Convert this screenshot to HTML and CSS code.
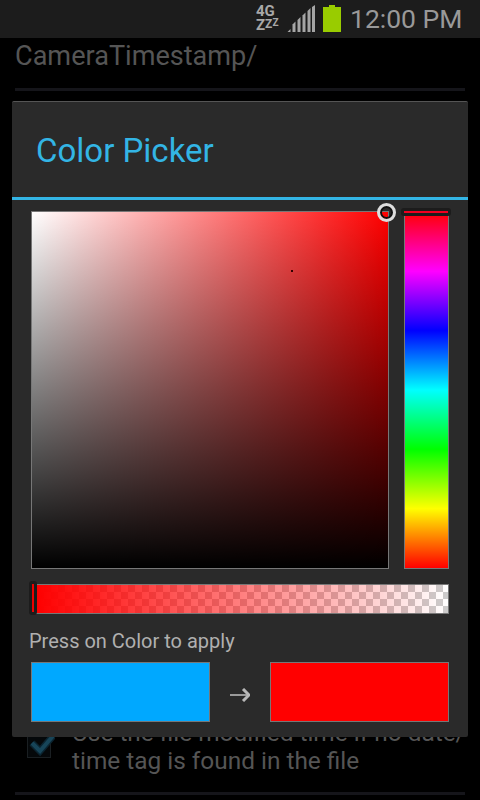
FILE: index.html
```html
<!DOCTYPE html>
<html lang="en">
<head>
<meta charset="utf-8">
<title>Color Picker</title>
<link rel="stylesheet" href="styles.css">
</head>
<body>
<div class="screen">
  <header class="status">
    <div class="net">
      <span class="net-top">4G</span>
      <span class="net-zzz"><span class="z1">Z</span><span class="z2">Z</span><span class="z3">Z</span></span>
    </div>
    <svg class="signal" width="28" height="27" viewBox="0 0 28 27">
      <polygon points="0.5,27 3.5,24 3.5,27" fill="#a5a5a5"/>
      <polygon points="5.5,27 5.5,19.5 8.5,16.5 8.5,27" fill="#a5a5a5"/>
      <polygon points="10.5,27 10.5,15 13.5,12 13.5,27" fill="#a5a5a5"/>
      <polygon points="15.5,27 15.5,10.5 18.5,7.5 18.5,27" fill="#a5a5a5"/>
      <polygon points="20.5,27 20.5,6 23.5,3 23.5,27" fill="#a5a5a5"/>
      <polygon points="25,27 25,2 28,0 28,27" fill="#a5a5a5"/>
    </svg>
    <div class="battery"><div class="battery-nub"></div><div class="battery-body"></div></div>
    <span class="time">12:00 PM</span>
  </header>

  <main class="prefs">
    <div class="path">CameraTimestamp/</div>
    <div class="rule"></div>
    <div class="spacer"></div>
    <div class="pref-row">
      <svg class="check" width="28" height="26" viewBox="0 0 28 26">
        <rect x="0.5" y="4.5" width="23" height="21" fill="#05080a" stroke="#1a1f22"/>
        <path d="M5 11l8 8L26 4" fill="none" stroke="#0b2430" stroke-width="7"/>
        <path d="M5 11l8 8L26 4" fill="none" stroke="#174559" stroke-width="4"/>
      </svg>
      <div class="pref-text">Use the file modified time if no date/<br>time tag is found in the file</div>
    </div>
    <div class="rule rule-end"></div>
  </main>

  <section class="dialog">
    <h1 class="title">Color Picker</h1>
    <div class="title-line"></div>
    <div class="picker">
      <div class="sv">
        <span class="speck"></span>
      </div>
      <div class="hue"></div>
    </div>
    <div class="alpha"></div>
    <p class="hint">Press on Color to apply</p>
    <div class="swatches">
      <button class="swatch swatch-old" type="button" aria-label="Old color"></button>
      <svg class="arrow" width="20" height="14" viewBox="0 0 20 14">
        <path d="M0 7h17" fill="none" stroke="#9a9a9a" stroke-width="2"/>
        <path d="M13 1l6 6-6 6" fill="none" stroke="#b8b8b8" stroke-width="3"/>
      </svg>
      <button class="swatch swatch-new" type="button" aria-label="New color"></button>
    </div>
    <span class="sv-handle"></span>
    <span class="hue-handle"></span>
    <span class="alpha-handle"></span>
  </section>
</div>
</body>
</html>
```

FILE: styles.css
```css
* { box-sizing: border-box; }
html, body { margin: 0; padding: 0; background: #000; }
body { font-family: Roboto, "Liberation Sans", sans-serif; }

.screen {
  position: relative;
  width: 480px;
  height: 800px;
  overflow: hidden;
  background: #000;
}

.status {
  display: flex;
  align-items: center;
  height: 38px;
  padding-left: 256px;
  background: #1c1c1c;
}
.net {
  display: flex;
  flex: none;
  flex-direction: column;
  width: 21px;
  color: #a8a8a8;
  font-weight: 700;
}
.net-top { height: 13px; margin-top: -1px; margin-bottom: 1px; font-size: 15px; line-height: 13px; }
.net-zzz { display: flex; align-items: flex-start; height: 13px; }
.z1 { font-size: 15px; line-height: 13px; }
.z2 { font-size: 12px; line-height: 10px; }
.z3 { font-size: 10px; line-height: 8px; }
.signal { flex: none; margin-left: 10px; margin-top: -1px; }
.battery { flex: none; margin-left: 8px; width: 18px; margin-top: -1px; }
.battery-nub { width: 6px; height: 2px; margin: 0 auto; background: #99cc00; }
.battery-body { height: 25px; background: #99cc00; }
.time {
  margin-left: 9px;
  font-size: 26.5px;
  line-height: 38px;
  color: #999;
  white-space: nowrap;
}

.prefs { padding: 0 15px; }
.path {
  height: 37px;
  font-size: 27.1px;
  line-height: 36px;
  color: #555;
}
.rule { height: 3px; margin-top: 13px; background: #15151a; }
.spacer { height: 633px; }
.pref-row { display: flex; gap: 17px; padding-left: 12px; }
.check { flex: none; margin-top: 8px; }
.pref-text {
  font-size: 24.4px;
  line-height: 28px;
  color: #555;
  white-space: nowrap;
  margin-top: -5px;
}
.rule-end { margin-top: 17px; }

.dialog {
  position: absolute;
  left: 12px;
  top: 101px;
  width: 456px;
  height: 636px;
  display: flex;
  flex-direction: column;
  background: #2a2a2a;
  border-top: 1px solid #555;
  border-radius: 2px;
}
.title {
  margin: 0;
  height: 95px;
  padding-left: 24px;
  font-size: 33px;
  font-weight: 400;
  line-height: 98px;
  color: #33b5e5;
}
.title-line { height: 3px; background: #33b5e5; }
.picker {
  display: flex;
  gap: 15px;
  margin: 11px 0 0 19px;
}
.sv {
  position: relative;
  width: 358px;
  height: 358px;
  border: 1px solid #777;
  background:
    linear-gradient(to bottom, rgba(0,0,0,0), #000),
    linear-gradient(to right, #fff, #f00);
}
.speck {
  position: absolute;
  left: 259px;
  top: 58px;
  width: 2px;
  height: 2px;
  background: #300;
}
.hue {
  width: 45px;
  height: 358px;
  border: 1px solid #777;
  background: linear-gradient(to bottom,
    #f00 0%, #f0f 16.67%, #00f 33.33%, #0ff 50%, #0f0 66.67%, #ff0 83.33%, #f00 100%);
}
.alpha {
  width: 413px;
  height: 30px;
  margin: 15px 0 0 24px;
  border: 1px solid #777;
  background:
    linear-gradient(to right, #f00, rgba(255,0,0,0)),
    repeating-conic-gradient(#ccc 0 25%, #fff 0 50%) 0 0 / 14px 14px;
}
.hint {
  margin: 15px 0 0 17px;
  font-size: 20px;
  line-height: 24px;
  color: #b0b0b0;
}
.swatches {
  display: flex;
  align-items: center;
  margin: 9px 0 0 19px;
}
.swatch {
  width: 179px;
  height: 60px;
  padding: 0;
  border: 1px solid #777;
  border-radius: 0;
}
.swatch-old { background: #00a8ff; }
.swatch-new { background: #f00; }
.arrow { margin: 6px 20px 0 20px; }

.sv-handle {
  position: absolute;
  left: 365px;
  top: 101px;
  width: 19px;
  height: 19px;
  border: 3px solid #ddd;
  border-radius: 50%;
  box-shadow: inset 0 0 0 2px #111;
}
.hue-handle {
  position: absolute;
  left: 389px;
  top: 106px;
  width: 50px;
  height: 8px;
  border: 3px solid #1c1c1c;
  border-radius: 3px;
  background: #f00020;
}
.alpha-handle {
  position: absolute;
  left: 17px;
  top: 479px;
  width: 8px;
  height: 34px;
  border: 3px solid #1c1c1c;
  border-radius: 3px;
  background: #e00;
}
```
